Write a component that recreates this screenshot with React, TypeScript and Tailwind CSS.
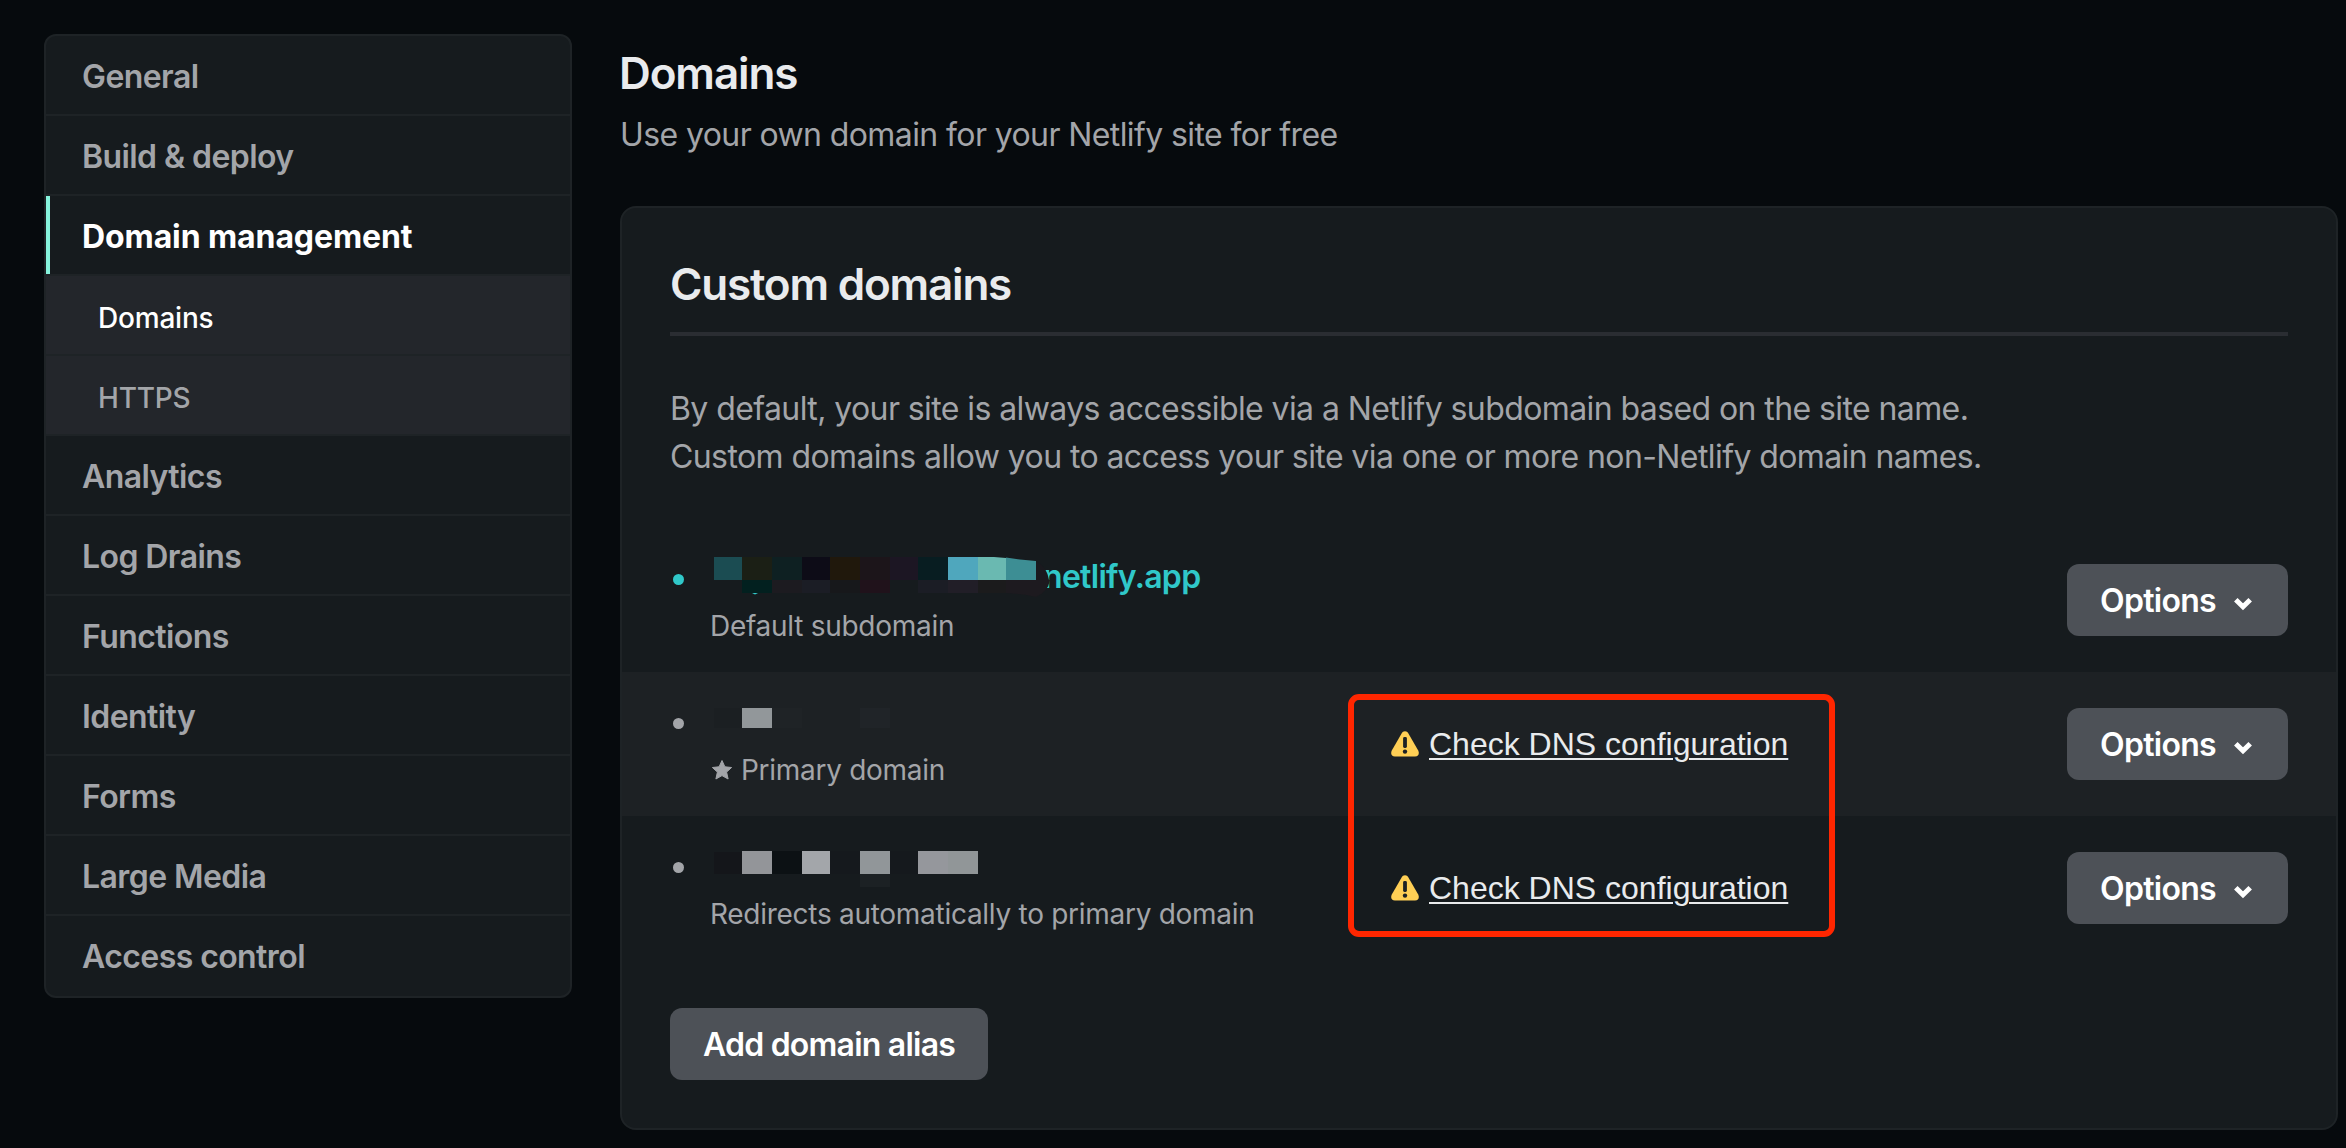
import React from 'react';

const nav: { label: string; active?: boolean; sub?: boolean }[] = [
  { label: 'General' },
  { label: 'Build & deploy' },
  { label: 'Domain management', active: true },
  { label: 'Domains', sub: true, active: true },
  { label: 'HTTPS', sub: true },
  { label: 'Analytics' },
  { label: 'Log Drains' },
  { label: 'Functions' },
  { label: 'Identity' },
  { label: 'Forms' },
  { label: 'Large Media' },
  { label: 'Access control' },
];

function navStyle(item: { active?: boolean; sub?: boolean }) {
  if (item.sub) {
    return item.active
      ? 'bg-[#23262b] pt-[5px] pl-[52px] text-[28px] font-medium tracking-[-0.2px] text-white'
      : 'bg-[#23262b] pt-[5px] pl-[52px] text-[28px] font-medium tracking-[-0.2px] text-[#a3a5a9]';
  }
  return item.active
    ? 'border-l-4 border-l-[#86f3dc] pt-1 pl-8 text-[32px] font-bold tracking-[-0.1px] text-white'
    : 'pt-1 pl-9 text-[32px] font-semibold tracking-[-0.58px] text-[#a3a5a9]';
}

function Sidebar() {
  return (
    <nav className="mt-[34px] w-[528px] shrink-0 overflow-hidden rounded-xl border-2 border-[#1e2326] bg-[#161b1e]">
      {nav.map((item) => (
        <div key={item.label} className="h-20 border-b-2 border-[#1e2326] last:border-transparent">
          <div className={`flex h-[78px] items-center ${navStyle(item)}`}>{item.label}</div>
        </div>
      ))}
    </nav>
  );
}

function OptionsButton() {
  return (
    <button className="flex h-[72px] w-[221px] items-center rounded-xl bg-[#4d5157] pl-[33px] pt-px text-[32px] font-semibold tracking-[-0.7px] text-white">
      Options
      <svg className="ml-[17px] mt-[7px] h-[14px] w-5" viewBox="0 0 20 14" fill="none">
        <path d="M2.800 2.800 L10 9.800 L17.200 2.800" stroke="#fff" strokeWidth="5" />
      </svg>
    </button>
  );
}

function Warning() {
  return (
    <svg className="mr-[10px] h-7 w-7" viewBox="0 0 28 28">
      <path
        d="M14 1.2c1.5 0 2.6.8 3.4 2.2l9.8 17.2c1.5 2.9.2 6-3.1 6H3.9c-3.3 0-4.6-3.1-3.1-6L10.600 3.400C11.400 2 12.500 1.200 14 1.200z"
        fill="#ffcf55"
      />
      <rect x="12.1" y="7" width="3.800" height="11" rx="1.400" fill="#1d2124" />
      <circle cx="14" cy="21.600" r="2.200" fill="#1d2124" />
    </svg>
  );
}

type Cell = [number, number, number, number, string];

const subdomainCells: Cell[] = [
  [4, 4, 28, 23, '#1b4c52'],
  [32, 4, 30, 23, '#1b1f15'],
  [62, 4, 30, 23, '#0e2022'],
  [92, 4, 28, 23, '#0d0c17'],
  [120, 4, 30, 23, '#20180c'],
  [150, 4, 30, 23, '#1c151a'],
  [180, 4, 28, 23, '#1c1623'],
  [208, 4, 30, 23, '#081d21'],
  [32, 27, 30, 13, '#02201f'],
  [62, 27, 30, 13, '#1c1b20'],
  [92, 27, 28, 13, '#1b1d25'],
  [120, 27, 30, 13, '#17181b'],
  [150, 27, 30, 13, '#20121b'],
  [208, 27, 30, 13, '#1b1d25'],
  [238, 27, 30, 13, '#211e27'],
  [268, 27, 28, 13, '#1b1b1c'],
];

const primaryCells: Cell[] = [
  [4, 11, 28, 20, '#1b1f22'],
  [32, 11, 30, 20, '#92979a'],
  [62, 11, 30, 20, '#1f2326'],
  [150, 11, 30, 20, '#202428'],
];

const aliasCells: Cell[] = [
  [4, 11, 28, 22, '#14161a'],
  [32, 10, 30, 23, '#939599'],
  [62, 10, 30, 23, '#0c1114'],
  [92, 10, 28, 23, '#a3a6aa'],
  [120, 10, 30, 23, '#15191d'],
  [150, 10, 30, 23, '#919699'],
  [180, 10, 28, 23, '#15191d'],
  [208, 10, 30, 23, '#95979c'],
  [238, 10, 30, 23, '#919698'],
  [150, 33, 30, 13, '#1c2124'],
];

function Cells({ cells }: { cells: Cell[] }) {
  return (
    <>
      {cells.map(([x, y, w, h, fill]) => (
        <rect key={`${x}-${y}`} x={x} y={y} width={w} height={h} fill={fill} />
      ))}
    </>
  );
}

function Row({
  name,
  note,
  status,
  teal,
  shaded,
}: {
  name: React.ReactNode;
  note: React.ReactNode;
  status?: boolean;
  teal?: boolean;
  shaded?: boolean;
}) {
  return (
    <div
      className={`grid h-36 grid-cols-[40px_681px_1fr_auto] items-center px-12 ${shaded ? 'bg-[#1d2124]' : ''}`}
    >
      <div
        className={`mb-[41px] ml-[3px] h-[11px] w-[11px] rounded-full ${teal ? 'bg-[#30c8c9]' : 'bg-[#a3a5a9]'}`}
      />
      <div className="self-start pt-[25px]">
        <div className="relative h-12">{name}</div>
        <div className="flex items-center pt-px text-[28px] leading-[48px] tracking-[-0.28px] text-[#a3a5a9]">
          {note}
        </div>
      </div>
      <div className="flex items-center font-['Liberation_Sans',sans-serif] text-[32px] leading-12 text-[#e9ebed]">
        {status && (
          <>
            <Warning />
            <a className="underline decoration-2 underline-offset-[3px]">Check DNS configuration</a>
          </>
        )}
      </div>
      <OptionsButton />
    </div>
  );
}

export default function App() {
  return (
    <div className="flex h-[1148px] w-[2346px] gap-12 overflow-hidden bg-[#060a0d] pl-11 pr-2 font-['Inter',sans-serif]">
      <div>
        <Sidebar />
      </div>
      <main className="flex-1 pt-[47px]">
        <h1 className="-ml-px text-[44px] font-semibold leading-[52px] tracking-[-1.1px] text-[#e9ebed]">Domains</h1>
        <p className="mt-3 text-[32px] leading-12 tracking-[-0.6px] text-[#a3a5a9]">
          Use your own domain for your Netlify site for free
        </p>
        <section className="mt-[47px] h-[924px] rounded-2xl border-2 border-[#1e2326] bg-[#161b1e]">
          <div className="px-12 pt-[50px]">
            <h2 className="border-b-4 border-[#2a2d32] pb-[22px] text-[44px] font-semibold leading-[52px] tracking-[-1.2px] text-[#e9ebed]">
              Custom domains
            </h2>
            <p className="mb-[47px] mt-[49px] text-[32px] leading-12 tracking-[-0.59px] text-[#a3a5a9]">
              By default, your site is always accessible via a Netlify subdomain based on the site name.
              <br />
              Custom domains allow you to access your site via one or more non-Netlify domain names.
            </p>
          </div>
          <div className="relative">
            <Row
              teal
              name={
                <>
                  <span className="pl-[333px] text-[32px] font-semibold leading-12 tracking-[-0.7px] text-[#30c8c9]">
                    netlify.app
                  </span>
                  <svg className="absolute left-0 top-0 h-12 w-[360px]" viewBox="0 0 360 48">
                    <Cells cells={subdomainCells} />
                    <path d="M296 27V10l30-2q11 6 13 19z" fill="#1a191e" />
                    <path d="M296 27h44q-2 12-14 17-14-3-30-4z" fill="#1d1a1f" />
                    <path d="M238 4h30v23h-30z" fill="#4fa7bd" />
                    <path d="M268 4h16l12 1v22h-28z" fill="#6ab9b1" />
                    <path d="M296 4.600l14 1.900 16 1.500v19h-30z" fill="#3d8e94" />
                    <path d="M42 40h6l-3 1.500z" fill="#30c8c9" />
                  </svg>
                </>
              }
              note="Default subdomain"
            />
            <Row
              shaded
              status
              name={
                <svg className="h-12 w-[300px]" viewBox="0 0 300 48">
                  <Cells cells={primaryCells} />
                </svg>
              }
              note={
                <>
                  <svg className="ml-[2px] mr-[9px] h-5 w-5" viewBox="0 0 20 20">
                    <path
                      d="M10 .5l2.900 6.300 6.700.7-5 4.600 1.500 6.900L10 15.600 3.900 19l1.500-6.900-5-4.600 6.700-.7z"
                      fill="#a3a5a9"
                      stroke="#a3a5a9"
                      strokeWidth="1"
                      strokeLinejoin="round"
                    />
                  </svg>
                  Primary domain
                </>
              }
            />
            <Row
              status
              name={
                <svg className="h-12 w-[300px]" viewBox="0 0 300 48">
                  <Cells cells={aliasCells} />
                </svg>
              }
              note="Redirects automatically to primary domain"
            />
            <div className="absolute left-[726px] top-[166px] h-[243px] w-[487px] rounded-[11px] border-[6px] border-[#ff2600]" />
          </div>
          <button className="ml-12 mt-12 h-[72px] w-[318px] rounded-xl bg-[#4d5157] pt-px text-[32px] font-semibold tracking-[-0.78px] text-white">
            Add domain alias
          </button>
        </section>
      </main>
    </div>
  );
}
